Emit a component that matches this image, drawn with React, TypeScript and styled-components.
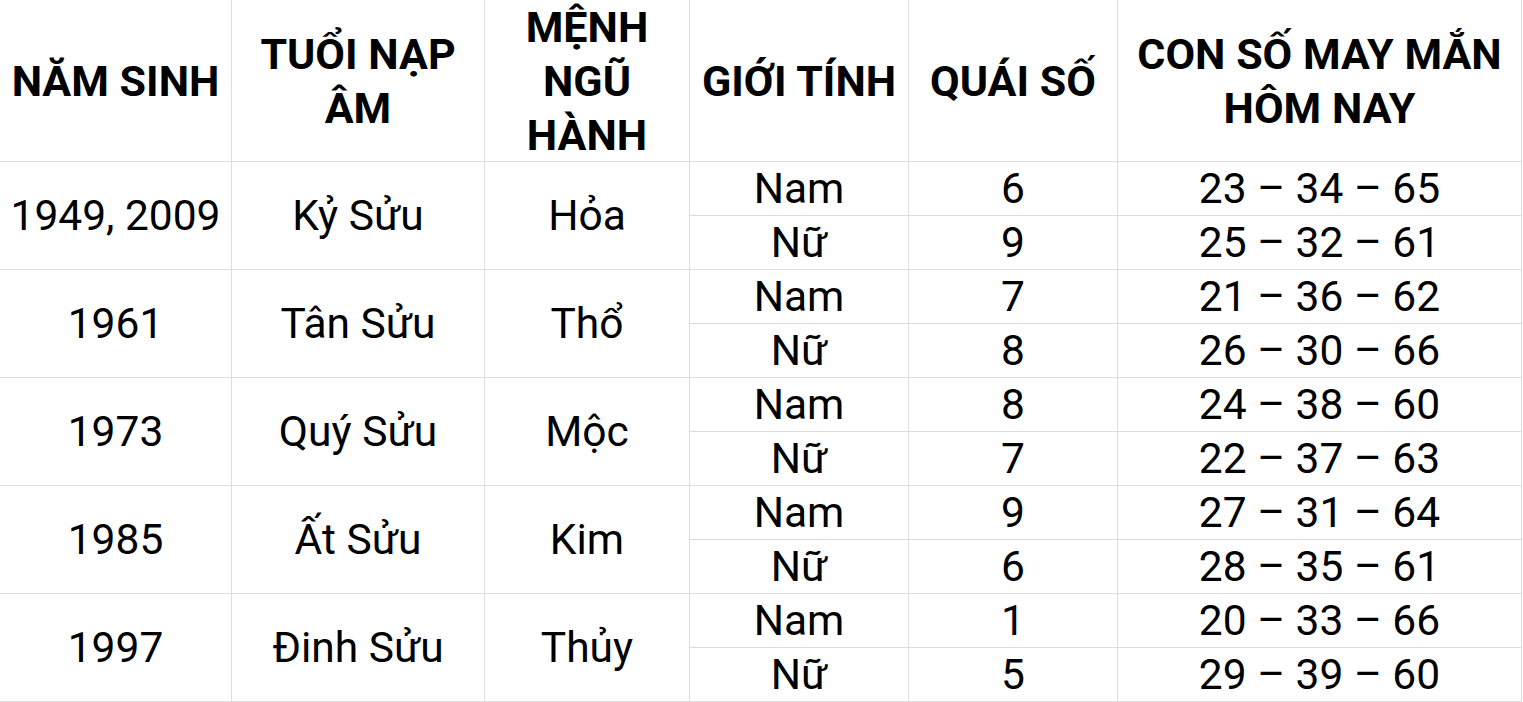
import React from 'react';
import styled, { createGlobalStyle } from 'styled-components';

const GlobalStyle = createGlobalStyle`
  html, body {
    margin: 0;
    padding: 0;
    background: #ffffff;
  }
  body {
    font-family: Roboto, "Liberation Sans", Arial, sans-serif;
    color: #000;
  }
`;

interface LuckRow {
  gender: string;
  quai: string;
  numbers: string;
}

interface YearGroup {
  years: string;
  tuoi: string;
  menh: string;
  rows: LuckRow[];
}

const data: YearGroup[] = [
  {
    years: '1949, 2009',
    tuoi: 'Kỷ Sửu',
    menh: 'Hỏa',
    rows: [
      { gender: 'Nam', quai: '6', numbers: '23 – 34 – 65' },
      { gender: 'Nữ', quai: '9', numbers: '25 – 32 – 61' },
    ],
  },
  {
    years: '1961',
    tuoi: 'Tân Sửu',
    menh: 'Thổ',
    rows: [
      { gender: 'Nam', quai: '7', numbers: '21 – 36 – 62' },
      { gender: 'Nữ', quai: '8', numbers: '26 – 30 – 66' },
    ],
  },
  {
    years: '1973',
    tuoi: 'Quý Sửu',
    menh: 'Mộc',
    rows: [
      { gender: 'Nam', quai: '8', numbers: '24 – 38 – 60' },
      { gender: 'Nữ', quai: '7', numbers: '22 – 37 – 63' },
    ],
  },
  {
    years: '1985',
    tuoi: 'Ất Sửu',
    menh: 'Kim',
    rows: [
      { gender: 'Nam', quai: '9', numbers: '27 – 31 – 64' },
      { gender: 'Nữ', quai: '6', numbers: '28 – 35 – 61' },
    ],
  },
  {
    years: '1997',
    tuoi: 'Đinh Sửu',
    menh: 'Thủy',
    rows: [
      { gender: 'Nam', quai: '1', numbers: '20 – 33 – 66' },
      { gender: 'Nữ', quai: '5', numbers: '29 – 39 – 60' },
    ],
  },
];

const headers = [
  'NĂM SINH',
  'TUỔI NẠP ÂM',
  'MỆNH NGŨ HÀNH',
  'GIỚI TÍNH',
  'QUÁI SỐ',
  'CON SỐ MAY MẮN HÔM NAY',
];

const Table = styled.div`
  display: grid;
  grid-template-columns: 232px 253px 205px 219px 209px 404px;
  grid-template-rows: 162px;
  grid-auto-rows: 54px;
  width: 1522px;
`;

const HeaderCell = styled.div`
  box-sizing: border-box;
  display: flex;
  align-items: center;
  justify-content: center;
  text-align: center;
  padding: 0 4px;
  border-right: 1px solid #dddddd;
  border-bottom: 1px solid #dddddd;
  font-weight: 700;
  font-size: 43px;
  line-height: 54px;
`;

const Cell = styled.div<{ $span?: number }>`
  box-sizing: border-box;
  display: flex;
  align-items: center;
  justify-content: center;
  text-align: center;
  white-space: nowrap;
  border-right: 1px solid #dddddd;
  border-bottom: 1px solid #dddddd;
  font-size: 42.5px;
  line-height: 53px;
  grid-row: ${(p) => (p.$span ? `span ${p.$span}` : 'auto')};
`;

const App: React.FC = () => {
  return (
    <>
      <GlobalStyle />
      <Table>
        {headers.map((h) => (
          <HeaderCell key={h}>{h}</HeaderCell>
        ))}
        {data.map((group) => (
          <React.Fragment key={group.years}>
            <Cell $span={2}>{group.years}</Cell>
            <Cell $span={2}>{group.tuoi}</Cell>
            <Cell $span={2}>{group.menh}</Cell>
            {group.rows.map((row) => (
              <React.Fragment key={row.gender}>
                <Cell>{row.gender}</Cell>
                <Cell>{row.quai}</Cell>
                <Cell>{row.numbers}</Cell>
              </React.Fragment>
            ))}
          </React.Fragment>
        ))}
      </Table>
    </>
  );
};

export default App;
